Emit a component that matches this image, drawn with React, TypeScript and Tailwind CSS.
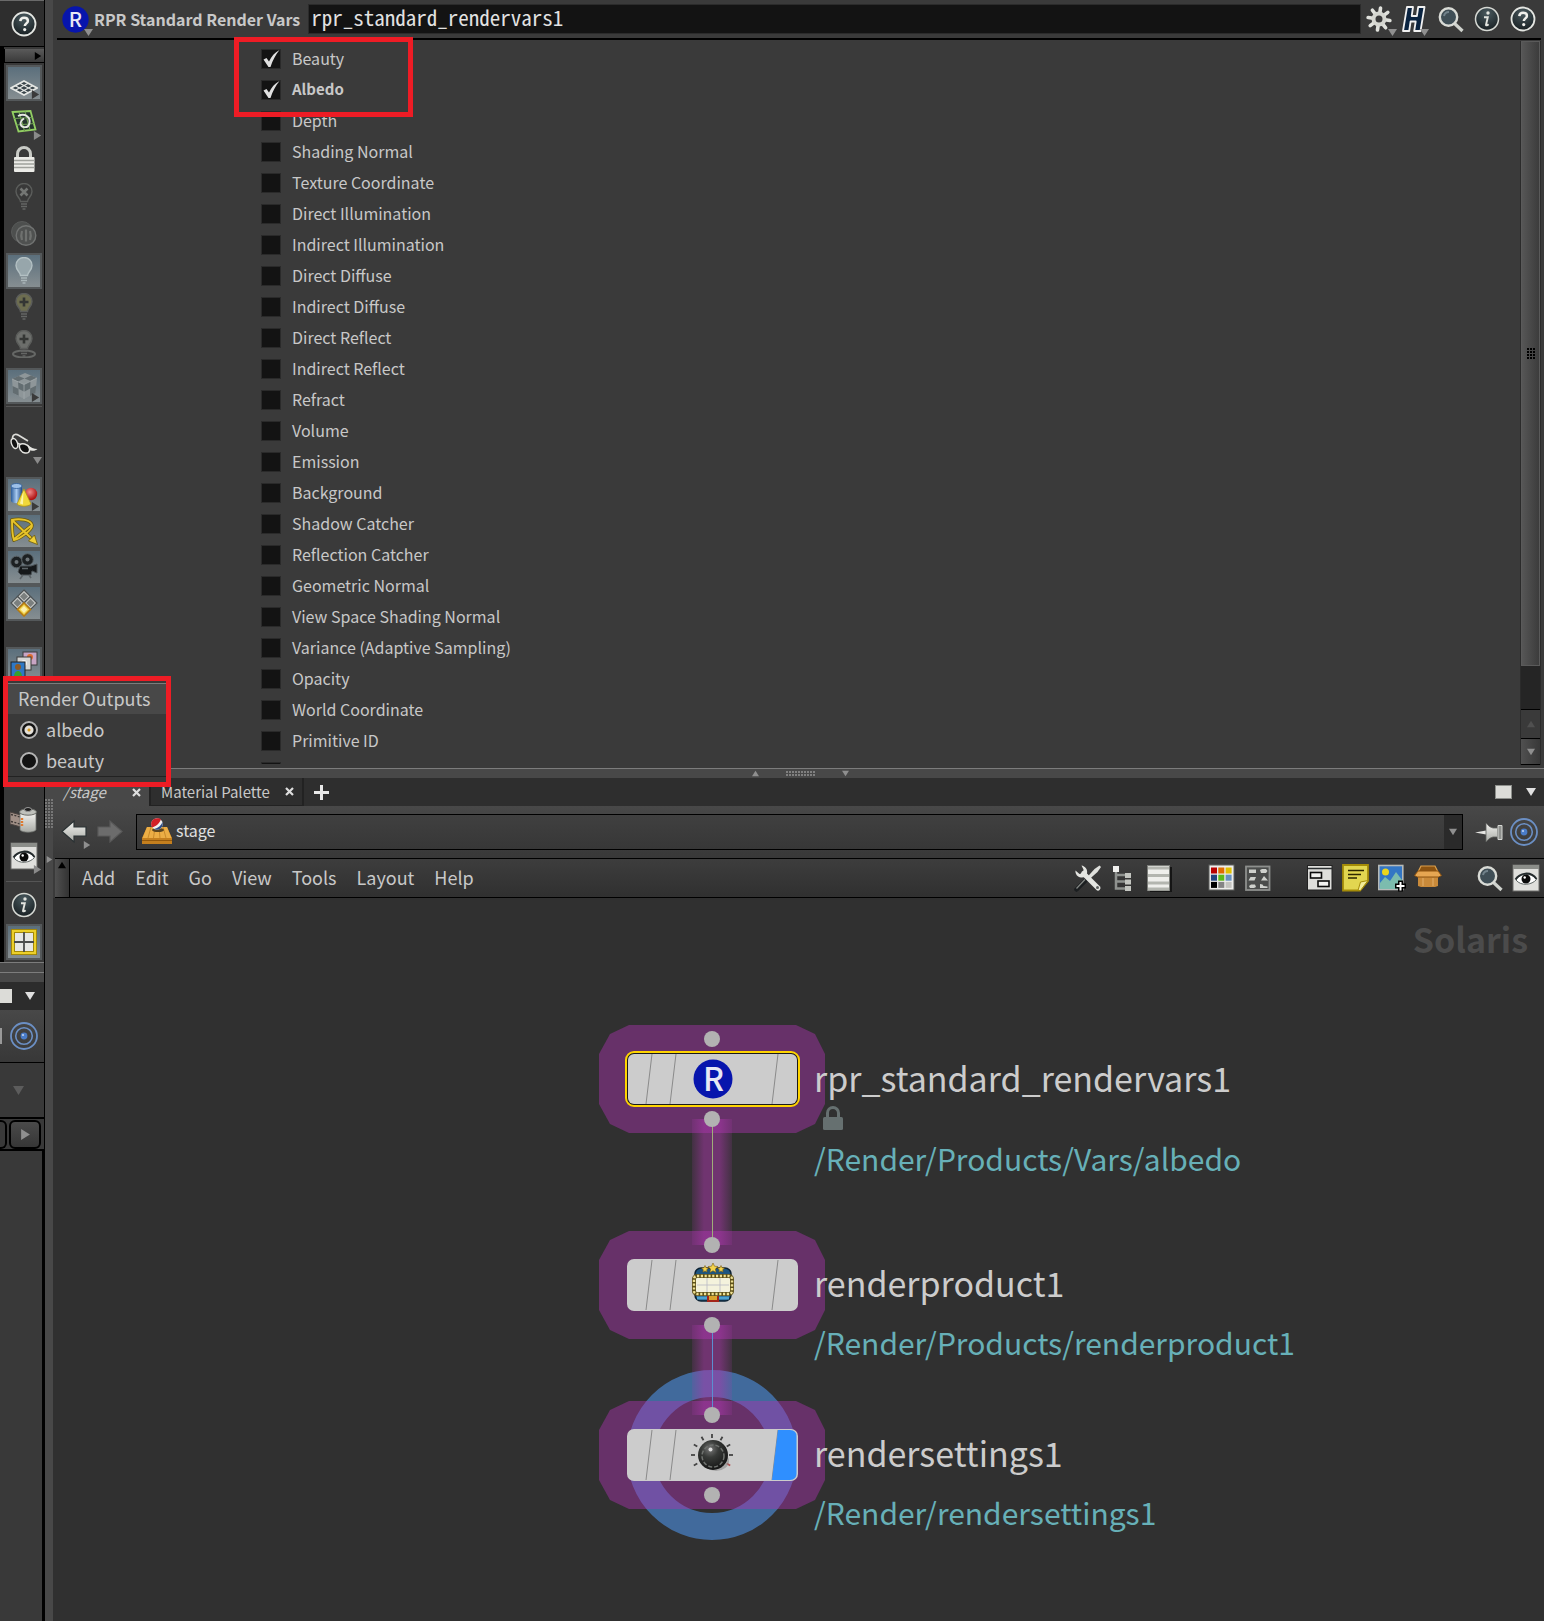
import React from "react";

type Kids = { children?: React.ReactNode };

const SANS = "font-['Noto_Sans_CJK_SC','Open_Sans',sans-serif]";

/* ---------- shared icon pieces ---------- */

function Svg({ children, size = 28, label }: Kids & { size?: number; label?: string }) {
  return (
    <svg width={size} height={size} viewBox="0 0 28 28" fill="none" className="shrink-0" aria-label={label} aria-hidden={label ? undefined : true}>
      {children}
    </svg>
  );
}

function Defs() {
  return (
    <svg width="0" height="0" className="absolute" aria-hidden="true">
      <defs>
        <radialGradient id="orb" cx="0.5" cy="0.25" r="0.8">
          <stop offset="0" stopColor="#4a5a5f" />
          <stop offset="1" stopColor="#151c1f" />
        </radialGradient>
        <linearGradient id="metal" x1="0" y1="0" x2="0" y2="1">
          <stop offset="0" stopColor="#f2f2ef" />
          <stop offset="1" stopColor="#a9aba6" />
        </linearGradient>
        <linearGradient id="wire" x1="0" y1="0" x2="1" y2="0">
          <stop offset="0" stopColor="#b038b0" stopOpacity="0.14" />
          <stop offset="0.3" stopColor="#b038b0" stopOpacity="0.5" />
          <stop offset="0.7" stopColor="#b038b0" stopOpacity="0.5" />
          <stop offset="1" stopColor="#b038b0" stopOpacity="0.14" />
        </linearGradient>
        <radialGradient id="knob" cx="0.4" cy="0.3" r="0.7">
          <stop offset="0" stopColor="#777" />
          <stop offset="0.4" stopColor="#383a38" />
          <stop offset="1" stopColor="#151515" />
        </radialGradient>
        <linearGradient id="cyl" x1="0" y1="0" x2="1" y2="0">
          <stop offset="0" stopColor="#2d5e9c" />
          <stop offset="0.5" stopColor="#a6c8ef" />
          <stop offset="1" stopColor="#1f4a86" />
        </linearGradient>
        <radialGradient id="redball" cx="0.4" cy="0.35" r="0.6">
          <stop offset="0" stopColor="#f08a8a" />
          <stop offset="1" stopColor="#b01414" />
        </radialGradient>
      </defs>
    </svg>
  );
}

const HelpIcon = () => (
  <Svg>
    <circle cx="14" cy="14" r="11.5" fill="url(#orb)" stroke="#e4e6e2" strokeWidth="1.8" />
    <path d="M10.3 11.2c.2-2.4 1.8-3.4 3.8-3.4 2.200 0 3.800 1.200 3.800 3.100 0 2.400-3.100 2.600-3.100 5.200" stroke="#f0f0ec" strokeWidth="2.500" />
    <circle cx="14.700" cy="19.600" r="1.600" fill="#f0f0ec" />
  </Svg>
);

const InfoIcon = () => (
  <Svg>
    <circle cx="14" cy="14" r="11.500" fill="url(#orb)" stroke="#d6d9d4" strokeWidth="1.500" />
    <circle cx="15" cy="8" r="1.700" fill="#e2e4df" />
    <path d="M11 12.200h3.800l-1.800 7.600c-.1.900 1 .8 2.600-.6" stroke="#e2e4df" strokeWidth="1.900" />
  </Svg>
);

const GearIcon = () => (
  <Svg>
    <g stroke="#e0e1dc" strokeWidth="3.600" strokeLinecap="round">
      {[0, 45, 90, 135, 180, 225, 270, 315].map((a) => (
        <path key={a} d="M14 8V3" transform={`rotate(${a + 8} 14 14)`} />
      ))}
    </g>
    <circle cx="14" cy="14" r="5.500" stroke="#d5d6d0" strokeWidth="4" />
  </Svg>
);

const HLogo = () => (
  <Svg>
    <path d="M6 2h6l-1.300 9h5.200L17.200 2h6.300l-4 24h-6.300l1.500-9.500H9.600L8.200 26H2z" fill="#0a2340" stroke="#f1f1f1" strokeWidth="1.800" strokeLinejoin="round" />
  </Svg>
);

const SearchIcon = () => (
  <Svg>
    <path d="M17 18l8.500 8" stroke="#cfd2cd" strokeWidth="3.200" />
    <circle cx="11.500" cy="12" r="8.700" fill="#3f4e56" stroke="#d9dbd6" strokeWidth="2.400" />
    <path d="M7 11a5 5 0 0 1 5-4" stroke="#71828b" strokeWidth="2" />
  </Svg>
);

const TargetIcon = () => (
  <Svg>
    <circle cx="14" cy="14" r="13" stroke="#6b8fc4" strokeWidth="1.800" />
    <circle cx="14" cy="14" r="8.300" stroke="#6b8fc4" strokeWidth="1.600" />
    <circle cx="14" cy="14" r="3.400" fill="#4a7cc8" />
    <circle cx="13" cy="13" r="1.100" fill="#bcd2f2" />
  </Svg>
);

const EyeIcon = () => (
  <Svg>
    <rect x="1" y="1" width="26" height="26" fill="#dfdfdc" stroke="#6a6a68" />
    <rect x="1" y="1" width="26" height="4" fill="#8b8d89" />
    <path d="M4 16c4-6.500 15-8.500 20.500-.5C20 21 9 22.500 4 16z" fill="#fff" stroke="#5d6463" strokeWidth="1" />
    <path d="M3.500 15.500c4-6.500 15-9 21-.5" stroke="#232a2c" strokeWidth="2" />
    <circle cx="14" cy="15" r="4.500" fill="#0a0a0a" />
    <circle cx="12.700" cy="13.500" r="1.200" fill="#fff" />
  </Svg>
);

const RBadge = () => (
  <svg width="27" height="27" viewBox="0 0 40 40" className="shrink-0" aria-hidden="true">
    <circle cx="20" cy="20" r="19.500" fill="#0715ad" />
    <text x="20" y="31" textAnchor="middle" fontFamily="'Noto Sans CJK SC','Open Sans',sans-serif" fontWeight="500" fontSize="30" fill="#e8e8f4">R</text>
  </svg>
);

const Tri = ({ dir, color = "#8f8f8f", w = 8 }: { dir: "down" | "up" | "right"; color?: string; w?: number }) => (
  <svg width={w} height={w} viewBox="0 0 10 10" className="shrink-0" aria-hidden="true">
    <path d={dir === "down" ? "M0 1h10L5 9z" : dir === "up" ? "M0 9h10L5 1z" : "M1 0v10l8-5z"} fill={color} />
  </svg>
);

/* ---------- left tool strip icons ---------- */

const PlaneIcon = () => (
  <Svg>
    <path d="M14 12l13 7-13 7-13-7z" fill="#39444a" stroke="#e6e8e5" strokeWidth="1.800" />
    <path d="M9.700 14.300l13 7M5.300 16.700l13 7M18.300 14.300l-13 7M22.700 16.700l-13 7" stroke="#e6e8e5" strokeWidth="1.300" />
  </Svg>
);
const GreenGridIcon = () => (
  <Svg>
    <path d="M2.500 4l18-1 5 18.500-17 2z" fill="#26332f" stroke="#93cf63" strokeWidth="1.800" />
    <path d="M9 4l5.500 19M15 3.500L20 22M4 10.500l18.500-1M6.500 17l18-1.500" stroke="#6f9f52" strokeWidth="1.200" />
    <path d="M8 8c7-3.500 12.500 1 11.500 7s-9 5-9 0c0-2.500 2-3.500 3.500-4.500" stroke="#e6e8e3" strokeWidth="1.900" />
  </Svg>
);
const LockIcon = () => (
  <Svg>
    <path d="M7.500 14V9a6.500 6.500 0 0 1 13 0v5" stroke="#c9cbc6" strokeWidth="3" />
    <rect x="4" y="12" width="20.500" height="15" rx="1" fill="#ecece8" />
    <path d="M4 15.500h20.500M4 19h20.500M4 22.500h20.500" stroke="#9fa19c" strokeWidth="1.300" />
  </Svg>
);
const Bulb = ({ kind }: { kind: "x" | "on" | "plus" | "ring" }) => (
  <Svg>
    {kind === "ring" && <ellipse cx="14" cy="24" rx="11" ry="3.500" stroke="#656765" strokeWidth="2" />}
    <path
      d="M10.500 18.500c0-3.500-4.500-5-4.500-10a8 8 0 0 1 16 0c0 5-4.500 6.500-4.500 10z"
      fill={kind === "x" ? "none" : kind === "on" ? "#97a6ab" : kind === "plus" ? "#6d6d50" : "#6c6e6b"}
      stroke={kind === "on" ? "#b3c0c3" : "#5b5d5b"}
      strokeWidth="1.400"
    />
    <path d="M11 21h6M11 23.500h6M12.500 26h3" stroke={kind === "on" ? "#aab6b9" : "#646664"} strokeWidth="1.300" />
    {kind === "x" && <path d="M10.500 5.500l7 7m0-7l-7 7" stroke="#747674" strokeWidth="2.600" />}
    {(kind === "plus" || kind === "ring") && <path d="M14 4.500v9M9.500 9h9" stroke="#343634" strokeWidth="2.600" />}
  </Svg>
);
const DiscsIcon = () => (
  <Svg>
    <circle cx="12" cy="12" r="10.500" fill="#4d4f4e" stroke="#585a59" />
    <circle cx="16" cy="15.500" r="9.800" fill="#4f5150" stroke="#717372" strokeWidth="1.400" />
    <path d="M12 11c-1 3-1 6 0 9M16 9.500v12M20 11c1 3 1 6 0 9" stroke="#6f716f" strokeWidth="2.200" />
  </Svg>
);
const CubeIcon = () => (
  <Svg>
    <path d="M15 1l12 5-1.500 15L14 27 3 21 2 7z" fill="#8e9699" />
    <path d="M8.500 4l6 2.500 6.500-3L27 6l-6.500 3-6-2.500L8 9.500 2 7zM8 9.500l6 3 .2 7.200-5.700-3zM2.500 14l6 2.700.2 7L3 21zM14 12.500l6.500-3.500-.3 7.500-6 3.200zM26.200 13.500l-6 3-.2 7.500 5.500-3z" fill="#636d71" />
    <path d="M2 7l12 5.500L27 6M14 12.500V27" stroke="#a2aaac" strokeWidth="0.800" />
  </Svg>
);
const GlassesIcon = () => (
  <Svg>
    <path d="M2.500 7C3 2.500 6.500 3 9 4.500l9 5.500" stroke="#dcdcd8" strokeWidth="1.700" />
    <path d="M1.500 8.500c2-2.500 5 0 6 3.500s-.5 6-2.500 5.500-5-6-3.500-9z" fill="#121212" stroke="#e6e6e2" strokeWidth="1.400" />
    <path d="M9.500 14c2.500-2.500 8-1 10 3 .8 4-1.500 5.500-4.500 5-4-.7-6.500-5-5.500-8z" fill="#121212" stroke="#e6e6e2" strokeWidth="1.500" />
    <path d="M7.500 13c.6-.8 1.600-.8 2.200.4" stroke="#e6e6e2" strokeWidth="1.500" />
    <path d="M17.500 13.500c3 3 6.500 4.500 10 4.500-2.500 2.500-6.500 2-8.500.5z" fill="#e6e6e2" />
  </Svg>
);
const ShapesIcon = () => (
  <Svg>
    <path d="M1 5v15c1.500 3 9.500 3 11 0V5z" fill="url(#cyl)" />
    <ellipse cx="6.500" cy="5" rx="5.500" ry="2.500" fill="#9cc0e8" stroke="#2d5e9c" strokeWidth="0.800" />
    <circle cx="21" cy="13" r="6.200" fill="url(#redball)" />
    <path d="M14 8l7 15c-3 3-11 3-14 0z" fill="#f0d83a" stroke="#b39513" strokeWidth="0.800" />
    <path d="M13.500 9.500L10 22.500l3 1z" fill="#fbf3a8" />
  </Svg>
);
const ConeArrowIcon = () => (
  <Svg>
    <path d="M2 3c8-2 19 0 20 5S9 22 4 23C2 18 2 8 2 3zM2 3l21 20M4 22L22 8" stroke="#6c5a09" strokeWidth="3.400" />
    <path d="M2 3c8-2 19 0 20 5S9 22 4 23C2 18 2 8 2 3zM2 3l19 18M4 22L22 8" stroke="#e6c32b" strokeWidth="1.900" />
    <path d="M27.500 27.500l-9-3.500 6-6z" fill="#f0cf36" stroke="#6c5a09" strokeWidth="0.800" />
  </Svg>
);
const CameraIcon = () => (
  <Svg>
    <circle cx="6.500" cy="9" r="5.800" fill="#1c2022" stroke="#596064" />
    <circle cx="17.500" cy="6.500" r="5.800" fill="#1c2022" stroke="#596064" />
    <circle cx="6.500" cy="9" r="2" fill="#6d7478" />
    <circle cx="17.500" cy="6.500" r="2" fill="#6d7478" />
    <path d="M10 13h11l6-2v9l-5-2-1 4H11l-3-3z" fill="#15181a" stroke="#4c5357" />
    <path d="M13 22l-3 4M19 22l2 3M12 15.500h6" stroke="#5c6367" strokeWidth="1.600" />
  </Svg>
);
const DiamondsIcon = () => (
  <Svg>
    <g stroke="#4d5254" strokeWidth="1.200" fill="#c9cbc8">
      <path d="M14 1l6.500 6.500L14 14 7.500 7.500z" />
      <path d="M7.500 7.500L14 14l-6.500 6.500L1 14z" />
      <path d="M20.500 7.500L27 14l-6.500 6.500L14 14z" />
    </g>
    <g fill="#7b7f7e">
      <path d="M14 3.500l4 4-4 4-4-4zM7.500 10l4 4-4 4-4-4zM20.500 10l4 4-4 4-4-4z" />
    </g>
    <path d="M14 14l6.500 6.500L14 27l-6.500-6.500z" fill="#f0d24a" stroke="#b57b12" strokeWidth="1.600" />
    <path d="M14 17l3.500 3.500L14 24l-3.500-3.500z" fill="#fbf0b0" />
  </Svg>
);
const PicturesIcon = () => (
  <Svg>
    <rect x="13" y="1" width="14" height="13" fill="#c7a5c4" stroke="#3b3b3b" />
    <circle cx="20" cy="6" r="3" fill="#df6d2e" />
    <rect x="7" y="6" width="14" height="13" fill="#d6d6d4" stroke="#3b3b3b" />
    <circle cx="14" cy="12" r="3" fill="#f2f2f2" />
    <rect x="1" y="11" width="14" height="15" fill="#2f78c4" stroke="#222" />
    <circle cx="8" cy="16" r="3" fill="#8f5a22" />
    <path d="M4 26c0-8 8-8 8 0z" fill="#37a02c" />
  </Svg>
);
const FilmIcon = () => (
  <Svg>
    <path d="M0 6l11 3v12L0 18z" fill="#a08f86" stroke="#4a4340" />
    <path d="M1 8.500l10 2.700M1 15.500l10 2.700" stroke="#3e3835" strokeWidth="1.400" strokeDasharray="2 1.500" />
    <path d="M10 7h16v17c-3 3-13 3-16 0z" fill="url(#metal)" stroke="#70726e" strokeWidth="0.800" />
    <ellipse cx="18" cy="6" rx="8.500" ry="3.200" fill="#bfc1bc" stroke="#6b6d69" />
    <ellipse cx="18" cy="3.500" rx="3.500" ry="2" fill="#1f1f1f" stroke="#999" />
    <path d="M12 12v8" stroke="#e07a30" strokeWidth="2.400" strokeDasharray="2 1" />
  </Svg>
);
const WindowIcon = () => (
  <Svg>
    <rect x="3" y="3" width="22" height="22" fill="#e6e7e4" stroke="#9c8106" strokeWidth="4" />
    <rect x="3" y="3" width="22" height="22" stroke="#ecd02a" strokeWidth="2.200" />
    <path d="M14 4v20M4 14h20" stroke="#4b4d4c" strokeWidth="1.800" />
  </Svg>
);

/* ---------- network toolbar icons ---------- */

const ToolsIcon = () => (
  <Svg>
    <path d="M2.500 25.500L12 16" stroke="#1b1e20" strokeWidth="4.500" strokeLinecap="round" />
    <path d="M2.500 24.500L11 15.500" stroke="#858885" strokeWidth="1.200" />
    <path d="M12 14.500L20.500 5l5-3.500L27 3l-3.500 5-9.500 8.500" fill="#dfe0dc" />
    <path d="M9.500 9.500L24 24" stroke="#e4e5e1" strokeWidth="5" strokeLinecap="round" />
    <path d="M7.500 1.500c3.500.5 6.500 4 5.500 8-.8 3-3.500 4.500-6 4C3.500 13 1 10 1.500 6.500l4 3.500 3.500-1 .5-3.500z" fill="#e4e5e1" />
    <circle cx="23.500" cy="23.500" r="1.500" fill="#5c5f5e" />
  </Svg>
);
const TreeIcon = () => (
  <Svg>
    <path d="M6 7v17.500h10M6 11h10M6 17.500h10" stroke="#8f928f" strokeWidth="2.500" />
    <path d="M3 2h6v6H3z" fill="#f0f0ee" />
    <path d="M15 9h6v5h-6zM15 15.500h6v5h-6zM15 22h6v5h-6z" fill="#c3c5c0" />
  </Svg>
);
const ListIcon = () => (
  <Svg>
    <rect x="4" y="3" width="22" height="25" fill="#151515" />
    <rect x="1.500" y="1.500" width="22" height="25" fill="#efefec" stroke="#7b7d79" />
    <path d="M2 4h21M2 11.500h21M2 19h21M2 25h21" stroke="#b3b5af" strokeWidth="3.200" />
  </Svg>
);
const PaletteIcon = () => {
  const c = ["#b80000", "#e06c00", "#e0c000", "#23447e", "#5cba18", "#6590bf", "#000", "#858585", "#c4c4c0"];
  return (
    <Svg>
      <rect x="1" y="1" width="25" height="25" fill="#ededeb" stroke="#5e605e" />
      {c.map((f, i) => (
        <rect key={f} x={3 + (i % 3) * 7.300} y={3.500 + Math.floor(i / 3) * 7.200} width="6" height="6" fill={f} />
      ))}
    </Svg>
  );
};
const ShapesPanelIcon = () => (
  <Svg>
    <rect x="2" y="2.500" width="23.500" height="23.500" fill="#4a4c4b" stroke="#8d8f8d" strokeWidth="1.800" />
    <path d="M5 5.500h7v3.500H5zM16 6l2-1h4l1.500 2L22 9h-5zM6.500 13H12l-1.500 3.500H4.500zM20 12l4 4.500h-7zM5 22l2-1.500h4l1 2.500-2 1H6zM16 20l2.500.5 1 1.500 4 .5V24h-7.500z" fill="#cfd1cd" />
  </Svg>
);
const LayoutIcon = () => (
  <Svg>
    <rect x="1.500" y="1.500" width="24.500" height="24.500" fill="#dededb" stroke="#222" />
    <path d="M2 4.500h24" stroke="#2b2f30" strokeWidth="1.500" />
    <rect x="4.500" y="8.500" width="11" height="5.500" fill="#f2f2f0" stroke="#0c0c0c" strokeWidth="1.600" />
    <rect x="12" y="17" width="11" height="5.500" fill="#f2f2f0" stroke="#0c0c0c" strokeWidth="1.600" />
  </Svg>
);
const NoteIcon = () => (
  <Svg>
    <path d="M1 1h25v16l-8 9.500H1z" fill="#e2d650" stroke="#a58c08" strokeWidth="1.800" />
    <path d="M26 16.500l-7.500 1.500-2.500 8.500h2.500z" fill="#f3ec9a" stroke="#a58c08" />
    <path d="M6 6.500h16M6 10.500h13M6 14h9" stroke="#2d2600" strokeWidth="1.600" />
  </Svg>
);
const ImageIcon = () => (
  <Svg>
    <rect x="0.800" y="1.500" width="24" height="24" fill="#3376c4" stroke="#b6bab8" strokeWidth="1.600" />
    <path d="M2 25v-6l5-6 5 4 6-9 6 8v9z" fill="#7cbcae" />
    <circle cx="7.500" cy="8" r="3.500" fill="#ecd51c" />
    <path d="M22.500 16.500v11M17 22h11" stroke="#000" strokeWidth="5" />
    <path d="M22.500 18v8.500M18.500 22h8" stroke="#fff" strokeWidth="2" />
  </Svg>
);
const BoxIcon = () => (
  <Svg>
    <path d="M7 2h14l3 6H4z" fill="#8c5310" stroke="#dca04c" strokeWidth="1.200" />
    <path d="M4 11h20v11l-3 1H7l-3-1z" fill="#c98a3a" />
    <path d="M4 7h20l3.500 4.500-3 1.500H3.500l-3-1.500z" fill="#e6a652" stroke="#8c5310" />
    <path d="M9 14v8M19 14v8" stroke="#e3b06c" />
  </Svg>
);
const PinIcon = () => (
  <Svg>
    <path d="M0 14.500L11 12.500v4z" fill="#e6e6e3" />
    <path d="M11 5c2 2 3 4 7 5h4.500v9H18c-4 1-5 3-7 5z" fill="url(#metal)" stroke="#5e605d" strokeWidth="0.800" />
    <path d="M23 7.500h4v14h-4z" fill="#8f918e" stroke="#d6d8d4" />
  </Svg>
);
const StageIcon = () => (
  <svg width="30" height="28" viewBox="0 0 30 28" aria-hidden="true">
    <path d="M5 9h20l5 11v6H0v-6z" fill="#c47f1e" />
    <path d="M5 9h20l4.500 11H.5z" fill="#ecae45" />
    <path d="M9 9L6 20M13 9l-1.500 11M17 9l1 11M21 9l3 11" stroke="#c98a2a" />
    <path d="M0 22.500h30" stroke="#94590c" />
    <ellipse cx="16" cy="12" rx="6" ry="2" fill="#5b4520" />
    <circle cx="15" cy="6" r="5.800" fill="#f0f0f0" />
    <path d="M10 9.500C7.500 4 11 0 15.500.2c1.500 0 2.500.4 3.300 1C18 5 14 8.500 10 9.500z" fill="#d31f27" />
    <path d="M20.500 4c1 4-1.500 7.500-5.500 7.800-1 0-2-.2-2.800-.8 4-1 7-3.500 8.300-7z" fill="#2c4c86" />
  </svg>
);
const Arrow = ({ dim, flip }: { dim?: boolean; flip?: boolean }) => (
  <svg width="26" height="26" viewBox="0 0 26 26" aria-hidden="true">
    <path
      d={flip ? "M25 12.500L13 2v6H1v9h12v6z" : "M1 12.500L13 2v6h12v9H13v6z"}
      fill={dim ? "#6c6c6c" : "url(#metal)"}
      stroke={dim ? "#5a5a5a" : "#2b3234"}
      strokeWidth="1.200"
    />
  </svg>
);

/* ---------- parameter pane ---------- */

const renderVars = [
  "Beauty", "Albedo", "Depth", "Shading Normal", "Texture Coordinate", "Direct Illumination", "Indirect Illumination",
  "Direct Diffuse", "Indirect Diffuse", "Direct Reflect", "Indirect Reflect", "Refract", "Volume", "Emission",
  "Background", "Shadow Catcher", "Reflection Catcher", "Geometric Normal", "View Space Shading Normal",
  "Variance (Adaptive Sampling)", "Opacity", "World Coordinate", "Primitive ID",
];

function VarBox({ on, label }: { on?: boolean; label?: string }) {
  return (
    <span className="relative flex">
      <input type="checkbox" aria-label={label} defaultChecked={on} className="peer size-5 appearance-none border border-[#2a2a2a] bg-[#131313]" />
      <svg viewBox="0 0 20 20" className="pointer-events-none absolute inset-0 hidden size-5 peer-checked:block" aria-hidden="true">
        <path d="M2.500 10.500l3-1.500 2.500 3.500C10.500 7.500 13.500 3.500 18.500 1 14.500 6 11.500 11.500 9.500 18H7.500z" fill="#e0e0e0" />
      </svg>
    </span>
  );
}

function VarRow({ name, on, bold }: { name: string; on: boolean; bold: boolean }) {
  return (
    <label className="flex h-[31px] shrink-0 items-center gap-[11px] whitespace-nowrap">
      <VarBox on={on} />
      <span className={bold ? "pb-0.5 text-[15px] font-bold leading-6" : "pb-0.5 text-base leading-6"}>{name}</span>
    </label>
  );
}

function ScrollBar() {
  return (
    <div className="flex w-[21px] shrink-0 flex-col border-x border-[#2b2b2b]">
      <div className="flex flex-1 items-center justify-center border border-[#5a5a5a] bg-linear-to-r from-[#565656] to-[#3c3c3c]">
        <div className="grid grid-cols-3 gap-px">
          {Array.from({ length: 12 }, (_, i) => (
            <span key={i} className="size-[2px] bg-black" />
          ))}
        </div>
      </div>
      <div className="h-11 border-b border-black bg-[#252525]" />
      <button aria-label="Scroll up" className="flex h-7 items-center justify-center"><Tri dir="up" color="#505050" /></button>
      <button aria-label="Scroll down" className="flex h-[27px] items-center justify-center border-y border-black bg-linear-to-r from-[#505050] to-[#383838]"><Tri dir="down" /></button>
    </div>
  );
}

function ParameterPane() {
  return (
    <section className="flex h-[768px] flex-col pl-1 pr-[3px]">
      <header className="flex h-10 shrink-0 items-center border-b-2 border-black pl-[5px]">
        <button className="relative mr-[5px] flex" aria-label="Node type">
          <RBadge />
          <span className="absolute -bottom-1 -right-1 flex"><Tri dir="down" w={9} /></span>
        </button>
        <label htmlFor="node-name" className="mr-2 whitespace-nowrap text-base font-bold leading-6">RPR Standard Render Vars</label>
        <input
          id="node-name"
          defaultValue="rpr_standard_rendervars1"
          className="h-[30px] min-w-0 flex-1 border border-[#2b2b2b] bg-[#131313] px-0.5 pb-0.5 font-['Noto_Sans_Mono_CJK_SC','Liberation_Mono',monospace] text-[21px] text-[#e2e2e2]"
        />
        <div className="ml-1 flex items-center gap-2">
          <button aria-label="Settings" className="relative flex"><GearIcon /><span className="absolute -bottom-1 -right-1"><Tri dir="down" w={9} /></span></button>
          <button aria-label="Houdini" className="relative flex"><HLogo /><span className="absolute -bottom-1 right-0"><Tri dir="down" w={9} /></span></button>
          <button aria-label="Search" className="flex"><SearchIcon /></button>
          <button aria-label="Info" className="flex"><InfoIcon /></button>
          <button aria-label="Help" className="flex"><HelpIcon /></button>
        </div>
        <span className="w-1" />
      </header>
      <div className="flex min-h-0 flex-1 pt-px">
        <div className="mb-1 flex min-w-0 flex-1 flex-col overflow-hidden pl-[204px] pt-[2px]">
          {renderVars.map((v, i) => (
            <VarRow key={v} name={v} on={i < 2} bold={i === 1} />
          ))}
          <div className="flex h-[31px] shrink-0 items-center"><VarBox label="Next output" /></div>
        </div>
        <div className="flex pb-[3px]"><ScrollBar /></div>
      </div>
    </section>
  );
}

/* ---------- network pane ---------- */

function Splitter() {
  return (
    <div className="flex h-2.5 shrink-0 items-center justify-center gap-[27px] border-t border-[#7c7c7c] bg-[#484848] pl-1">
      <Tri dir="up" w={7} />
      <div className="grid grid-cols-10 gap-px">
        {Array.from({ length: 20 }, (_, i) => (
          <span key={i} className="size-[2px] bg-[#808080]" />
        ))}
      </div>
      <Tri dir="down" w={7} />
    </div>
  );
}

const Close = () => (
  <svg width="9" height="9" viewBox="0 0 9 9" aria-hidden="true"><path d="M1 1l7 7m0-7L1 8" stroke="#dedede" strokeWidth="2.200" /></svg>
);

function Tabs() {
  return (
    <div className="flex h-7 shrink-0 items-center bg-[#2e2e2e] text-[15px] leading-6">
      <div className="flex h-full w-24 items-center justify-between bg-[#484848] pl-2.5 pr-2">
        <button className="italic">/stage</button>
        <button aria-label="Close stage"><Close /></button>
      </div>
      <div className="flex h-full w-[155px] items-center justify-between border-x-2 border-b border-[#222] pl-2.5 pr-2">
        <button className="whitespace-nowrap">Material Palette</button>
        <button aria-label="Close palette"><Close /></button>
      </div>
      <button aria-label="New tab" className="ml-2.5">
        <svg width="15" height="15" viewBox="0 0 15 15" aria-hidden="true"><path d="M7.500 0v15M0 7.500h15" stroke="#e8e8e8" strokeWidth="3" /></svg>
      </button>
      <div className="ml-auto mr-2 flex items-center gap-3.5">
        <button aria-label="Maximize" className="h-3.5 w-[17px] border border-[#8d8f8b] bg-[#dcdcd8]" />
        <button aria-label="Pane menu"><Tri dir="down" color="#e0e0e0" w={10} /></button>
      </div>
    </div>
  );
}

function PathBar() {
  return (
    <div className="flex h-[52px] shrink-0 items-center bg-linear-to-b from-[#484848] to-[#383838] pl-2 pr-1.5">
      <button aria-label="Back" className="relative flex"><Arrow /><span className="absolute -bottom-1 -right-1"><Tri dir="right" /></span></button>
      <button aria-label="Forward" className="ml-2.5 flex"><Arrow dim flip /></button>
      <div className="relative ml-[13px] flex h-9 flex-1 border border-black bg-linear-to-b from-[#404040] to-[#373737]">
        <span className="pointer-events-none absolute left-[5px] top-[3px]"><StageIcon /></span>
        <select aria-label="Network path" className="flex-1 appearance-none bg-transparent pb-1 pl-[39px] text-base leading-6 text-[#e0e0e0]">
          <option>stage</option>
        </select>
        <span className="pointer-events-none absolute inset-y-0 right-0 flex w-[18px] items-center justify-center bg-[#2a2a2a]"><Tri dir="down" /></span>
      </div>
      <button aria-label="Pin" className="ml-3 flex"><PinIcon /></button>
      <button aria-label="Link" className="ml-[7px] flex"><TargetIcon /></button>
    </div>
  );
}

const Tool = ({ label, children, className = "" }: Kids & { label: string; className?: string }) => (
  <button aria-label={label} className={`flex ${className}`}>{children}</button>
);

function MenuBar() {
  return (
    <div className="ml-0.5 flex h-10 shrink-0 items-stretch border-y border-black bg-linear-to-b from-[#3d3d3d] to-[#303030]">
      <button aria-label="Collapse menu" className="flex w-[15px] justify-center border-r border-black bg-linear-to-r from-[#505050] to-[#333] pt-0.5"><Tri dir="up" color="#000" /></button>
      <nav className="flex items-center gap-5 pb-0.5 pl-3 text-lg leading-6">
        {["Add", "Edit", "Go", "View", "Tools", "Layout", "Help"].map((m) => (
          <button key={m}>{m}</button>
        ))}
      </nav>
      <div className="ml-auto mr-1 flex items-center gap-2">
        <Tool label="Tools"><ToolsIcon /></Tool>
        <Tool label="Tree view"><TreeIcon /></Tool>
        <Tool label="List view"><ListIcon /></Tool>
        <Tool label="Color palette" className="ml-[26px]"><PaletteIcon /></Tool>
        <Tool label="Shape palette"><ShapesPanelIcon /></Tool>
        <Tool label="Network box" className="ml-[26px]"><LayoutIcon /></Tool>
        <Tool label="Sticky note"><NoteIcon /></Tool>
        <Tool label="Background image"><ImageIcon /></Tool>
        <Tool label="Asset"><BoxIcon /></Tool>
        <Tool label="Find" className="ml-[26px]"><SearchIcon /></Tool>
        <Tool label="Visibility"><EyeIcon /></Tool>
      </div>
    </div>
  );
}

const HALO = "M30 0H197L216 9 226 29V79L216 99 197 108H30L11 99 0 79V29L11 9z";

function NodeShape({ y, selected, display, children }: Kids & { y: number; selected?: boolean; display?: boolean }) {
  return (
    <g transform={`translate(546 ${y})`}>
      <path d={HALO} fill="#aa33b0" fillOpacity="0.45" />
      {selected ? (
        <>
          <rect x="27" y="27" width="173" height="54" rx="8" fill="#1a1a1a" stroke="#ffd400" strokeWidth="2" />
          <rect x="29" y="29" width="169" height="50" rx="6" fill="#cccccc" />
        </>
      ) : (
        <rect x="28" y="28" width="171" height="52" rx="7" fill="#cccccc" />
      )}
      <path d="M53 29l-6 50M77 29l-6 50M179 29l-6 50" stroke="#8a8a8a" fill="none" />
      {display && <path d="M179 29h12q6.500 0 6.500 6.500v37q0 6.500-6.500 6.500h-18z" fill="#2f8fff" />}
      {children}
    </g>
  );
}

function Graph() {
  return (
    <svg width="860" height="724" viewBox="0 1 860 724" className="absolute left-0 top-0" role="img" aria-label="Node network">
      <circle cx="659" cy="558" r="71.500" fill="none" stroke="#4a86d0" strokeOpacity="0.68" strokeWidth="27" />
      <NodeShape y={128} selected>
        <circle cx="114" cy="54" r="19.500" fill="#0715ad" />
        <text x="114.500" y="65.500" textAnchor="middle" fontFamily="'Noto Sans CJK SC','Open Sans',sans-serif" fontWeight="500" fontSize="32" fill="#e8e8f4">R</text>
      </NodeShape>
      <NodeShape y={334}>
        <rect x="96" y="37" width="36" height="33" rx="6" fill="#1d5580" stroke="#0c2233" strokeWidth="1.500" />
        <path d="M98 67h32" stroke="#4da3cf" strokeWidth="3" />
        <rect x="109" y="64" width="10" height="6" fill="#d9a42c" stroke="#a3241a" strokeWidth="2" />
        <rect x="95" y="45" width="38" height="18" rx="3" fill="#f4f2dc" stroke="#5d501a" strokeWidth="4" />
        <rect x="95" y="45" width="38" height="18" rx="3" fill="none" stroke="#efe193" strokeWidth="2.400" strokeDasharray="2.200 1.600" />
        <path d="M98 54h32M108 47v14M121 47v14" stroke="#b9b9c4" strokeWidth="0.800" />
        <path d="M114 32l1.500 3.200 3.500.4-2.600 2.400.7 3.500-3.100-1.700-3.100 1.700.7-3.500-2.600-2.400 3.500-.4zM106 34.500l1 2.200 2.500.3-1.800 1.700.4 2.400-2.100-1.200-2.100 1.200.4-2.400-1.800-1.700 2.500-.3zM122 34.500l1 2.200 2.500.3-1.800 1.700.4 2.400-2.100-1.200-2.100 1.200.4-2.400-1.800-1.700 2.500-.3z" fill="#f3d34b" stroke="#7b5a10" strokeWidth="0.600" />
      </NodeShape>
      <NodeShape y={504} display>
        <g stroke="#444" strokeWidth="1.800">
          {[-120, -90, -60, -30, 0, 30, 60, 90].map((a) => (
            <path key={a} d="M113 37v-4" transform={`rotate(${a} 113 54)`} />
          ))}
          <path d="M113 37v-4" stroke="#b05050" transform="rotate(120 113 54)" />
        </g>
        <ellipse cx="117" cy="60" rx="13" ry="10" fill="#888" fillOpacity="0.600" />
        <circle cx="114" cy="54" r="15" fill="url(#knob)" />
        <circle cx="114" cy="55" r="11" fill="none" stroke="#6f726f" strokeWidth="1.500" strokeDasharray="4 2" />
        <circle cx="111.500" cy="48.500" r="2" fill="#ddd" />
      </NodeShape>
      {[[222, 348], [428, 518]].map(([a, b]) => (
        <g key={a}>
          <rect x="639" y={a} width="40" height={b - a} fill="url(#wire)" />
          <path d={`M659.500 ${a}V${b}`} stroke={a === 222 ? "#9fae78" : "#5c8fd0"} />
        </g>
      ))}
      {[142, 222, 348, 428, 518, 598].map((y) => (
        <circle key={y} cx="659" cy={y} r="8" fill="#b2b2b2" />
      ))}
      <g transform="translate(770 209)">
        <path d="M4.500 12V7a5.500 5.500 0 0 1 11 0v5" stroke="#667070" strokeWidth="3" fill="none" />
        <rect y="11" width="20" height="13" rx="1.500" fill="#667070" />
      </g>
    </svg>
  );
}

function NodeLabel({ name, path, className }: { name: string; path: string; className: string }) {
  return (
    <div className={`absolute left-[761px] flex flex-col whitespace-nowrap ${className}`}>
      <span className="text-[34px] leading-[50px] text-[#cccccc]">{name}</span>
      <span className="text-[30px] leading-[50px] text-[#67b0b8]">{path}</span>
    </div>
  );
}

function Canvas() {
  return (
    <div className="relative min-h-[720px] flex-1 overflow-hidden bg-[#303030]">
      <Graph />
      <NodeLabel name="rpr_standard_rendervars1" path="/Render/Products/Vars/albedo" className="top-[155px] gap-[30px]" />
      <NodeLabel name="renderproduct1" path="/Render/Products/renderproduct1" className="top-[360px] gap-[9px]" />
      <NodeLabel name="rendersettings1" path="/Render/rendersettings1" className="top-[530px] gap-[9px]" />
      <span className="absolute right-4 top-4 text-[34px] font-bold leading-[50px] text-[#4b4b4b]">Solaris</span>
    </div>
  );
}

/* ---------- left strip ---------- */

function Slot({ children, active, label, mark, className = "h-9" }: Kids & { active?: boolean; label: string; mark?: "right" | "down"; className?: string }) {
  return (
    <button
      aria-label={label}
      className={`relative flex w-9 shrink-0 items-center justify-center ${className} ${active ? "border-2 border-[#54585a] bg-linear-to-b from-[#5b6f7c] to-[#868e91]" : ""}`}
    >
      {children}
      {mark && (
        <span className="absolute bottom-0 right-0 flex"><Tri dir={mark} color={active ? "#3a3a3a" : "#8a8a8a"} w={9} /></span>
      )}
    </button>
  );
}

function LeftStrip() {
  return (
    <aside className="flex w-[45px] shrink-0 flex-col border-r border-black bg-[#393939]">
      <div className="flex h-[47px] shrink-0 items-center justify-end border-b border-t border-b-black border-t-[#6a6a6a] bg-[#2e2e2e] pr-1.5">
        <button aria-label="Help" className="flex"><HelpIcon /></button>
      </div>
      <div className="flex h-[915px] shrink-0 flex-col items-center border-l-4 border-black pt-0.5">
        <button aria-label="Expand" className="flex h-3.5 w-full items-center justify-end border-b border-l border-black bg-linear-to-b from-[#5a5a5a] to-[#3a3a3a] pr-0.5"><Tri dir="right" color="#000" /></button>
        <Slot label="Construction plane" active mark="right" className="mt-0.5 h-9"><PlaneIcon /></Slot>
        <Slot label="Snapping" mark="right" className="mt-[3px] h-9"><GreenGridIcon /></Slot>
        <Slot label="Lock camera" className="h-[38px]"><LockIcon /></Slot>
        <Slot label="No lighting" className="h-[38px]"><Bulb kind="x" /></Slot>
        <Slot label="Headlight"><DiscsIcon /></Slot>
        <Slot label="Normal lighting" active className="mt-px h-9"><Bulb kind="on" /></Slot>
        <Slot label="High quality lighting"><Bulb kind="plus" /></Slot>
        <Slot label="Shadows" className="h-[38px]"><Bulb kind="ring" /></Slot>
        <Slot label="Materials" active mark="right" className="mt-[5px] h-9"><CubeIcon /></Slot>
        <hr className="mt-0.5 w-9 border-[#555]" />
        <Slot label="Display options" mark="down" className="mb-3 mt-[18px] h-10"><GlassesIcon /></Slot>
        <Slot label="Geometry" active mark="right"><ShapesIcon /></Slot>
        <Slot label="Lights" active><ConeArrowIcon /></Slot>
        <Slot label="Cameras" active><CameraIcon /></Slot>
        <Slot label="Tiles" active><DiamondsIcon /></Slot>
        <Slot label="Render outputs" active className="mt-[26px] h-9"><PicturesIcon /></Slot>
        <Slot label="Flipbook" className="mt-[119px] h-9"><FilmIcon /></Slot>
        <Slot label="Preview" mark="right"><EyeIcon /></Slot>
        <hr className="mt-[7px] w-9 border-[#555]" />
        <Slot label="Info" className="mt-1 h-[38px]"><InfoIcon /></Slot>
        <Slot label="View layout" active><WindowIcon /></Slot>
      </div>
      <div className="h-5 shrink-0 border-t border-[#7c7c7c] bg-[#484848] pt-[9px]"><hr className="border-[#7c7c7c]" /></div>
      <div className="flex h-7 shrink-0 items-center justify-between bg-[#2c2c2c] pr-[9px]">
        <button aria-label="Maximize viewer" className="h-3.5 w-3 bg-[#dcdcd8]" />
        <button aria-label="Viewer menu"><Tri dir="down" color="#e0e0e0" w={10} /></button>
      </div>
      <div className="flex h-[53px] shrink-0 items-center justify-between border-b border-black bg-linear-to-b from-[#484848] to-[#383838] pr-1.5">
        <span className="h-4 w-[2px] bg-[#999]" />
        <button aria-label="Viewer link" className="flex"><TargetIcon /></button>
      </div>
      <div className="flex h-[54px] shrink-0 items-center justify-center pr-[7px]"><Tri dir="down" color="#5c5c5c" w={11} /></div>
      <div className="flex h-[34px] shrink-0 items-center gap-0.5 border-y-2 border-black bg-[#393939]">
        <span className="h-[29px] w-[7px] rounded-r-md border-2 border-l-0 border-black" />
        <button aria-label="Play" className="flex h-[29px] w-8 items-center justify-center rounded-md border-2 border-black bg-linear-to-b from-[#4a4a4a] to-[#363636]"><Tri dir="right" w={11} /></button>
      </div>
      <div className="flex-1 border-r-2 border-black" />
    </aside>
  );
}

function Gutter() {
  return (
    <div className="flex w-2 shrink-0 flex-col items-center bg-[#484848] pt-[799px]">
      <div className="grid grid-cols-3 gap-px">
        {Array.from({ length: 30 }, (_, i) => (
          <span key={i} className="size-[2px] bg-[#777]" />
        ))}
      </div>
      <span className="mt-7 flex"><Tri dir="right" w={7} /></span>
    </div>
  );
}

function OutputsMenu() {
  return (
    <fieldset className="absolute left-[3px] top-[676px] w-[168px] border-[5px] border-[#ee1c25] bg-[#393939] pb-[5px] text-lg leading-6">
      <div className="mt-0.5 flex h-[31px] items-center whitespace-nowrap border-t border-[#7c7c7c] bg-[#484848] pb-0.5 pl-2.5">Render Outputs</div>
      {["albedo", "beauty"].map((o) => (
        <label key={o} className="flex h-[31px] items-center gap-2 pl-3">
          <input
            type="radio"
            name="output"
            defaultChecked={o === "albedo"}
            className="size-[18px] appearance-none rounded-full border-2 border-[#b4b4b4] bg-[#131313] checked:bg-[radial-gradient(circle,#d99a20_0_1px,#e4e0d8_2px_4px,#131313_5px)]"
          />
          <span className="pb-0.5">{o}</span>
        </label>
      ))}
      <div className="h-px bg-[#222]" />
    </fieldset>
  );
}

export default function App() {
  return (
    <div className={`relative flex min-h-screen bg-[#3a3a3a] text-[#c8c8c8] ${SANS}`}>
      <Defs />
      <LeftStrip />
      <Gutter />
      <main className="flex min-w-0 flex-1 flex-col">
        <ParameterPane />
        <Splitter />
        <Tabs />
        <PathBar />
        <MenuBar />
        <Canvas />
      </main>
      <OutputsMenu />
      <div className="pointer-events-none absolute left-[234px] top-[37px] h-20 w-[179px] border-[5px] border-[#ee1c25]" />
    </div>
  );
}
